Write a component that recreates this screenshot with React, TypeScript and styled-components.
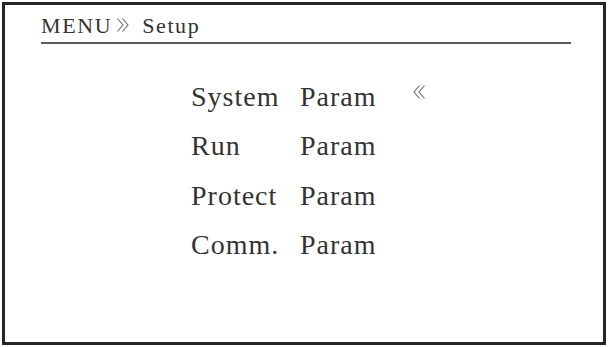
import styled, { createGlobalStyle } from 'styled-components';

// ================================================================================================================
// Setup menu screen
// ================================================================================================================
const GlobalStyle = createGlobalStyle`
  html, body {
    margin: 0;
    padding: 0;
    background: #ffffff;
  }
`;

const items = [
  { name: 'System', value: 'Param', active: true },
  { name: 'Run', value: 'Param', active: false },
  { name: 'Protect', value: 'Param', active: false },
  { name: 'Comm.', value: 'Param', active: false },
];

// double chevron, drawn thin like the panel font's guillemets
function Chevrons({ dir }: { dir: 'left' | 'right' }) {
  const pts =
    dir === 'left'
      ? ['6.5,0.5 1,7 6.5,13.5', '11.5,0.5 6,7 11.5,13.5']
      : ['0.5,0.5 6,7 0.5,13.5', '5.5,0.5 11,7 5.5,13.5'];
  return (
    <svg width="12" height="14" viewBox="0 0 12 14" fill="none" stroke="#6a6a6a" strokeWidth="1.1">
      {pts.map((p) => (
        <polyline key={p} points={p} />
      ))}
    </svg>
  );
}

export default function App() {
  return (
    <>
      <GlobalStyle />
      <Screen>
        <Frame>
          <Header>
            <span>MENU</span>
            <HeaderArrow>
              <Chevrons dir="right" />
            </HeaderArrow>
            <span>Setup</span>
          </Header>
          <MenuList>
            {items.map(({ name, value, active }) => (
              <MenuRow key={`menu__${name}`}>
                <Label>{name}</Label>
                <Label>{value}</Label>
                <Cursor>{active && <Chevrons dir="left" />}</Cursor>
              </MenuRow>
            ))}
          </MenuList>
        </Frame>
      </Screen>
    </>
  );
}

const Screen = styled.div`
  width: 609px;
  height: 347px;
  box-sizing: border-box;
  padding: 2px 3px 2px 2px;
  font-family: 'Liberation Serif', serif;
  color: #333333;
`;

const Frame = styled.div`
  height: 100%;
  box-sizing: border-box;
  border: 3px solid #262626;
  padding: 0 32px 0 36px;
`;

const Header = styled.div`
  display: flex;
  align-items: flex-start;
  font-size: 22px;
  line-height: 24px;
  letter-spacing: 1.6px;
  padding: 9px 0 4px;
  border-bottom: 2px solid #5c5c5c;
`;

const HeaderArrow = styled.span`
  display: flex;
  margin: 4px 13px 0 5px;
`;

const MenuList = styled.div`
  margin: 28px 0 0 150px;
  display: flex;
  flex-direction: column;
`;

const MenuRow = styled.div`
  display: grid;
  grid-template-columns: 109px 113px auto;
  height: 49.4px;
  font-size: 28px;
  line-height: 49.4px;
  letter-spacing: 1px;
`;

const Label = styled.span`
  white-space: nowrap;
`;

const Cursor = styled.span`
  display: flex;
  align-self: start;
  margin-top: 13px;
`;
